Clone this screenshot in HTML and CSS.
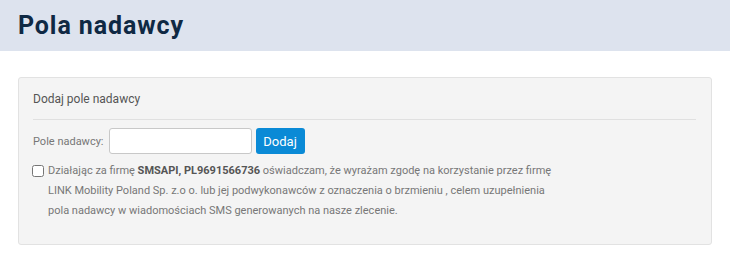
FILE: index.html
```html
<!DOCTYPE html>
<html lang="pl">
<head>
    <meta charset="UTF-8">
    <meta name="viewport" content="width=device-width, initial-scale=1.0">
    <title>Pola nadawcy</title>
    <link rel="stylesheet" href="styles.css">
</head>
<body>
    <div class="page-header">
        <h1>Pola nadawcy</h1>
    </div>

    <div class="panel">
        <div class="panel-title">Dodaj pole nadawcy</div>

        <form class="sender-form" onsubmit="return false;">
            <label for="senderName">Pole nadawcy:</label>
            <input type="text" id="senderName">
            <button type="submit">Dodaj</button>
        </form>

        <label class="consent">
            <input type="checkbox">
            <span class="consent-text">Działając za firmę <b>SMSAPI, PL9691566736</b> oświadczam, że wyrażam zgodę na korzystanie przez firmę LINK Mobility Poland Sp. z.o o. lub jej podwykonawców z oznaczenia o brzmieniu , celem uzupełnienia pola nadawcy w wiadomościach SMS generowanych na nasze zlecenie.</span>
        </label>
    </div>
</body>
</html>
```

FILE: styles.css
```css
body {
    margin: 0;
    font-family: Roboto, "Liberation Sans", sans-serif;
    background-color: #fff;
    color: #555;
}
.page-header {
    background-color: #dde3ee;
    height: 51px;
    padding: 0 18px;
    display: flex;
    align-items: center;
}
.page-header h1 {
    margin: 0;
    font-size: 25px;
    font-weight: bold;
    color: #0f2944;
    letter-spacing: 0.9px;
}
.panel {
    margin: 26px 18px 0 18px;
    width: 663px;
    background-color: #f4f4f4;
    border: 1px solid #e2e2e2;
    border-radius: 3px;
    padding: 14px 15px 23px 14px;
}
.panel-title {
    font-size: 12px;
    color: #555;
    padding-bottom: 13px;
    border-bottom: 1px solid #e0e0e0;
}
.sender-form {
    display: flex;
    align-items: center;
    margin-top: 8px;
}
.sender-form label {
    font-size: 11px;
    color: #777;
    margin-right: 5px;
}
.sender-form input {
    height: 24px;
    border: 1px solid #c8c8c8;
    border-radius: 3px;
    background-color: #fff;
    padding: 0 4px;
    width: 133px;
}
.sender-form button {
    margin-left: 4px;
    height: 26px;
    width: 49px;
    border: none;
    border-radius: 3px;
    background-color: #0a8ad6;
    color: #fff;
    font-family: inherit;
    font-size: 13px;
    cursor: pointer;
}
.consent {
    display: flex;
    align-items: flex-start;
    margin-top: 7px;
}
.consent input {
    margin: 4px 4px 0 -1px;
    width: 12px;
    height: 12px;
    flex-shrink: 0;
}
.consent-text {
    width: 512px;
    font-size: 11px;
    line-height: 20px;
    color: #777;
}
.consent-text b {
    color: #555;
}
```
